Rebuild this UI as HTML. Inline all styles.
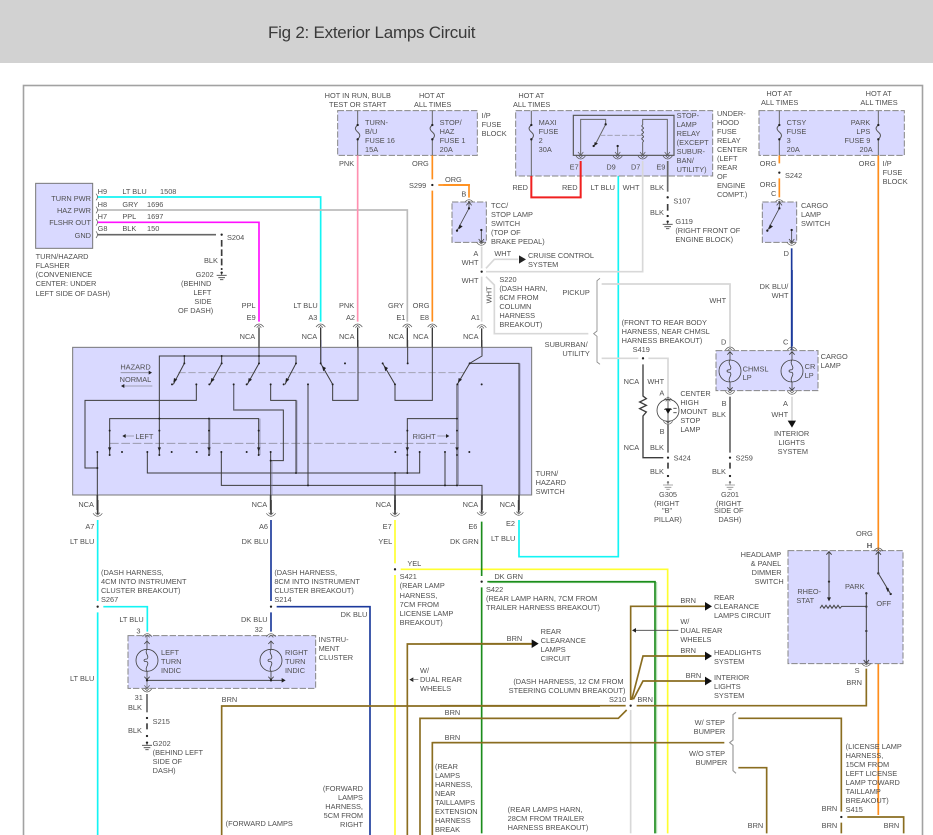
<!DOCTYPE html>
<html><head><meta charset="utf-8"><title>Fig 2: Exterior Lamps Circuit</title>
<style>
html,body{margin:0;padding:0;background:#fff;width:933px;height:835px;overflow:hidden}
#hd{position:absolute;left:0;top:0;width:933px;height:63px;background:#d2d2d2}
#hd span{position:absolute;left:268px;top:23px;font:17px/20px "Liberation Sans",sans-serif;letter-spacing:-.25px;color:#3a3a3a}
svg{position:absolute;left:0;top:0}
text{font-family:"Liberation Sans",sans-serif;font-size:22.2px;fill:#505050;stroke:none}
.w{fill:none;stroke-linejoin:miter}
.k{stroke:#3c3c3c}.g{stroke:#666}.c{stroke:#14f4f4}.m{stroke:#ff10ff}.y{stroke:#ffff30}.o{stroke:#ff8e1c}.r{stroke:#f02020}.p{stroke:#ff90b0}.b{stroke:#1c3a9c}.n{stroke:#8a6d20}.l{stroke:#d8d8d8}.a{stroke:#bcbcbc}.v{stroke:#1c8c1c}
.d{fill:none;stroke:#222;stroke-width:7;stroke-linecap:round}
.t{fill:none;stroke:#444;stroke-width:2.5}
.x{fill:#d9d9ff;stroke:#858585;stroke-width:3;stroke-dasharray:19 6}
.s{fill:#d9d9ff;stroke:#777;stroke-width:3}
.f{fill:#222;stroke:none}
.h{fill:#111;stroke:none}
.e{fill:none;stroke:#555;stroke-width:2}
</style></head><body>
<div id="hd"><span>Fig 2: Exterior Lamps Circuit</span></div>
<svg width="933" height="835" viewBox="0 0 933 835">
<defs>
<path id="ct" class="e" d="M-14 8Q0-10 14 8M-7 10L0 3L7 10"/>
<path id="cb" class="e" d="M-14-8Q0 10 14-8M-7-10L0-3L7-10"/>
<g id="fu"><path class="e" style="stroke-width:3" d="M0 0C-10 8-8 14 0 21C8 28 9 34 0 43"/><path class="d" d="M0 0h.01M0 43h.01"/></g>
<path id="ad" class="f" d="M-5-8H5L0 4Z"/>
<g id="gr"><path class="e" style="stroke:#444;stroke-width:2.5" d="M0 0V8M-15 8H15M-10 15H10M-5 21H5"/><path class="d" d="M0 0h.01"/></g>
<g id="lp"><circle r="33" fill="none" stroke="#444" stroke-width="2.5"/><path class="t" d="M0-33C-9-22 9-12 0-4C-12-4-12 4 0 4C9 12-9 22 0 33M0-58V-33M0 33V58M-8-49L0-58L8-49M-8 49L0 58L8 49"/></g>
<g id="sw"><rect class="x" x="907" y="366" width="103" height="121"/><path class="t" d="M958 366V385L922 452M995 450V487M987 477L995 487L1003 477M950 376L958 366L966 376"/><path class="d" d="M958 385h.01M922 452h.01M995 450h.01"/><path class="f" d="M929 434L939 439L927 448Z"/></g>
</defs>

<rect x="23.5" y="85.5" width="899" height="770" fill="none" stroke="#a2a2a2" stroke-width="1.6"/>

<!-- long wires real coords -->
<g class="w" stroke-width="1.7">
<path class="c" d="M519 520V556.7H618.3V161"/>
<path class="o" d="M878.3 155V815"/>
</g>

<!-- zoom1 -->
<g transform="translate(0,80) scale(.33333)" stroke-width="5">
<rect class="s" x="107" y="310" width="171" height="195"/>
<rect class="x" x="1013" y="92" width="419" height="134"/>
<path class="w g" style="stroke-width:3" d="M1073 92V135M1073 178V226M1297 92V135M1297 178V226"/>
<use href="#fu" x="1073" y="135"/><use href="#fu" x="1297" y="135"/>
<path class="w c" d="M293 351H962V725"/>
<path class="w a" d="M293 390H1222V725"/>
<path class="w m" d="M293 427H777V725"/>
<path class="w g" d="M293 464H648"/>
<path class="w k" style="stroke-dasharray:20 8" d="M665 480V570"/>
<path class="w p" d="M1073 226V725"/>
<path class="w o" d="M1297 226V298M1297 332V725M1315 315H1410"/>
<path class="d" d="M665 464h.01M1297 315h.01"/>
<use href="#gr" x="665" y="578"/>
<path class="w k" style="stroke-width:4" d="M777 742V810M962 742V810M1073 742V810M1222 742V810M1297 742V810"/>
<use href="#ct" x="777" y="733"/><use href="#ct" x="962" y="733"/><use href="#ct" x="1073" y="733"/><use href="#ct" x="1222" y="733"/><use href="#ct" x="1297" y="733"/>
<path class="e" d="M288 341Q297 351 288 361M288 380Q297 390 288 400M288 417Q297 427 288 437M288 454Q297 464 288 474"/>
<text x="974" y="54">HOT IN RUN, BULB</text><text x="987" y="81">TEST OR START</text>
<text x="1257" y="54">HOT AT</text><text x="1242" y="81">ALL TIMES</text>
<text x="1095" y="135">TURN-</text><text x="1095" y="162">B/U</text><text x="1095" y="189">FUSE 16</text><text x="1095" y="216">15A</text>
<text x="1319" y="135">STOP/</text><text x="1319" y="162">HAZ</text><text x="1319" y="189">FUSE 1</text><text x="1319" y="216">20A</text>
<text x="1017" y="258">PNK</text><text x="1236" y="258">ORG</text>
<text x="1227" y="324">S299</text><text x="1335" y="306">ORG</text>
<text x="293" y="342">H9</text><text x="367" y="342">LT BLU</text><text x="480" y="342">1508</text>
<text x="293" y="381">H8</text><text x="367" y="381">GRY</text><text x="441" y="381">1696</text>
<text x="293" y="417">H7</text><text x="367" y="417">PPL</text><text x="441" y="417">1697</text>
<text x="293" y="453">G8</text><text x="367" y="453">BLK</text><text x="441" y="453">150</text>
<g text-anchor="end"><text x="273" y="363">TURN PWR</text><text x="273" y="399">HAZ PWR</text><text x="273" y="435">FLSHR OUT</text><text x="273" y="474">GND</text></g>
<text x="681" y="480">S204</text><text x="612" y="549">BLK</text><text x="587" y="591">G202</text>
<text x="543" y="618">(BEHIND</text><text x="580" y="645">LEFT</text><text x="583" y="672">SIDE</text><text x="534" y="699">OF DASH)</text>
<text x="107" y="537">TURN/HAZARD</text><text x="107" y="564">FLASHER</text><text x="107" y="591">(CONVENIENCE</text><text x="107" y="618">CENTER: UNDER</text><text x="107" y="648">LEFT SIDE OF DASH)</text>
<text x="725" y="684">PPL</text><text x="740" y="720">E9</text><text x="719" y="777">NCA</text>
<text x="880" y="684">LT BLU</text><text x="925" y="720">A3</text><text x="905" y="777">NCA</text>
<text x="1017" y="684">PNK</text><text x="1038" y="720">A2</text><text x="1017" y="777">NCA</text>
<text x="1164" y="684">GRY</text><text x="1189" y="720">E1</text><text x="1165" y="777">NCA</text>
<text x="1238" y="684">ORG</text><text x="1260" y="720">E8</text><text x="1239" y="777">NCA</text>
</g>

<!-- zoom2 -->
<g transform="translate(460,80) scale(.33333)" stroke-width="5">
<rect class="x" x="167" y="92" width="591" height="196"/>
<rect class="x" x="897" y="92" width="436" height="134"/>
<rect x="340" y="106" width="302" height="120" fill="none" stroke="#555" stroke-width="3.5"/>
<path class="w g" style="stroke-width:3" d="M214 92V135M214 178V288M958 92V135M958 178V226M1255 92V135M1255 178V226"/>
<use href="#fu" x="214" y="135"/><use href="#fu" x="958" y="135"/><use href="#fu" x="1255" y="135"/>
<path class="w g" style="stroke-width:3" d="M362 226V118H437V133L405 195M548 226V186M548 135V118H622V226M473 198V226"/>
<path class="e" style="stroke-width:3" d="M548 135c-9 5 9 8 0 12c-9 5 9 8 0 13c-9 5 9 8 0 13c-9 5 9 8 0 13"/>
<path class="w a" style="stroke-width:2.5;stroke-dasharray:16 6;stroke:#9a9aa8" d="M420 166H548"/>
<path class="d" d="M437 133h.01M401 198h.01M473 198h.01"/>
<path class="f" d="M404 186L414 191L402 198Z"/>
<path class="e" d="M354 216L362 226L370 216M465 216L473 226L481 216M540 216L548 226L556 216M614 216L622 226L630 216"/>
<use href="#cb" x="362" y="236"/><use href="#cb" x="473" y="236"/><use href="#cb" x="548" y="236"/><use href="#cb" x="623" y="236"/>
<path class="w r" style="stroke-width:6" d="M214 288V352H362V243"/>
<path class="w l" d="M548 243V575H78M65 500V565M65 590V725M78 565L103 538H175M78 590L103 615V761H385M425 612H810V800"/>
<path class="w g" d="M623 243V335"/>
<path class="w k" style="stroke-dasharray:20 7" d="M623 372V395"/>
<path class="d" d="M623 352h.01M623 408h.01M65 575h.01M958 278h.01"/>
<use href="#gr" x="623" y="425"/>
<path class="f" d="M177 526V551L198 538Z"/>
<path class="w o" d="M-50 315H27V353M958 226V250M958 295V352"/>
<use href="#ct" x="27" y="360"/><use href="#ct" x="958" y="360"/>
<use href="#sw" x="-931"/><use href="#sw"/>
<use href="#cb" x="64" y="495"/><use href="#cb" x="995" y="495"/>
<path class="w b" d="M995 505V810"/>
<use href="#ct" x="65" y="735"/>
<path class="w k" style="stroke-width:4" d="M65 745V810"/>
<text x="175" y="54">HOT AT</text><text x="159" y="81">ALL TIMES</text>
<text x="65" y="114">I/P</text><text x="65" y="141">FUSE</text><text x="65" y="168">BLOCK</text>
<text x="236" y="135">MAXI</text><text x="236" y="162">FUSE</text><text x="236" y="189">2</text><text x="236" y="216">30A</text>
<text x="650" y="114">STOP-</text><text x="650" y="141">LAMP</text><text x="650" y="168">RELAY</text><text x="650" y="195">(EXCEPT</text><text x="650" y="222">SUBUR-</text><text x="650" y="249">BAN/</text><text x="650" y="276">UTILITY)</text>
<text x="771" y="108">UNDER-</text><text x="771" y="135">HOOD</text><text x="771" y="162">FUSE</text><text x="771" y="189">RELAY</text><text x="771" y="216">CENTER</text><text x="771" y="243">(LEFT</text><text x="771" y="270">REAR</text><text x="771" y="297">OF</text><text x="771" y="324">ENGINE</text><text x="771" y="351">COMPT.)</text>
<text x="329" y="268">E7</text><text x="439" y="268">D9</text><text x="513" y="268">D7</text><text x="589" y="268">E9</text>
<text x="157" y="330">RED</text><text x="306" y="330">RED</text><text x="392" y="330">LT BLU</text><text x="488" y="330">WHT</text><text x="570" y="330">BLK</text>
<text x="640" y="370">S107</text><text x="570" y="405">BLK</text><text x="646" y="432">G119</text><text x="646" y="459">(RIGHT FRONT OF</text><text x="646" y="486">ENGINE BLOCK)</text>
<text x="93" y="384">TCC/</text><text x="93" y="411">STOP LAMP</text><text x="93" y="438">SWITCH</text><text x="93" y="465">(TOP OF</text><text x="93" y="492">BRAKE PEDAL)</text>
<text x="4" y="349">B</text><text x="40" y="528">A</text><text x="5" y="555">WHT</text><text x="5" y="609">WHT</text>
<text transform="translate(94,670) rotate(-90)" x="0" y="0">WHT</text>
<text x="103" y="528">WHT</text><text x="204" y="534">CRUISE CONTROL</text><text x="204" y="561">SYSTEM</text>
<text x="118" y="606">S220</text><text x="118" y="633">(DASH HARN,</text><text x="118" y="660">6CM FROM</text><text x="118" y="687">COLUMN</text><text x="118" y="714">HARNESS</text><text x="118" y="741">BREAKOUT)</text>
<text x="33" y="720">A1</text><text x="9" y="777">NCA</text>
<text x="919" y="48">HOT AT</text><text x="903" y="75">ALL TIMES</text><text x="1217" y="48">HOT AT</text><text x="1201" y="75">ALL TIMES</text>
<text x="980" y="135">CTSY</text><text x="980" y="162">FUSE</text><text x="980" y="189">3</text><text x="980" y="216">20A</text>
<g text-anchor="end"><text x="1231" y="135">PARK</text><text x="1231" y="162">LPS</text><text x="1231" y="189">FUSE 9</text><text x="1238" y="216">20A</text></g>
<text x="899" y="258">ORG</text><text x="975" y="294">S242</text><text x="899" y="321">ORG</text><text x="933" y="348">C</text>
<text x="1023" y="384">CARGO</text><text x="1023" y="411">LAMP</text><text x="1023" y="438">SWITCH</text><text x="971" y="528">D</text>
<text x="1196" y="258">ORG</text><text x="1268" y="258">I/P</text><text x="1268" y="285">FUSE</text><text x="1268" y="312">BLOCK</text>
</g>

<!-- zoom3: hazard switch -->
<g transform="translate(60,340) scale(.33333)" stroke-width="3">
<rect class="s" x="38" y="22" width="1377" height="443"/>
<path class="w a" style="stroke-dasharray:22 8;stroke-width:3;stroke:#a4a4b4" d="M355 98H1215"/>
<path class="w a" style="stroke-dasharray:26 8;stroke-width:2.5;stroke:#8f8fa0" d="M150 310H1185"/>
<path class="w k" style="stroke-width:3" d="M298 345V48H708V70L675 133M373 48V70L340 133M485 48V70L450 133M597 0V70L562 133M782 0V70L818 133V181H894V0M968 70L1005 133V181H1117V0M1043 0V70M1266 0V48L1229 70L1192 133M1229 70H1377V510M409 133V181H75V384H112M112 336V510M521 133V210H670V362H632M632 336V510M632 133V181H708V399M744 133V436M149 345V236H596V345M447 236V345M262 336V399H1079V336M484 336V436H1266V510M1005 399V510M1042 399V236H1191M1191 133V436M1155 336V436"/>
<path class="w k" style="stroke-width:5" d="M632 465V510M1005 465V510M1266 465V510M1377 465V510M112 465V510"/>
<path class="w a" style="stroke:#8080a0;stroke-width:2" d="M784 0V70M1195 133V436M711 181V399M600 236V345M450 236V345M522 133V210M636 362V465M1380 70V465"/>
<path class="d" style="stroke-width:6" d="M373 48h.01M485 48h.01M597 48h.01M373 70h.01M485 70h.01M597 70h.01M708 70h.01M336 133h.01M409 133h.01M448 133h.01M521 133h.01M560 133h.01M632 133h.01M671 133h.01M744 133h.01M782 70h.01M855 70h.01M818 133h.01M968 70h.01M1043 70h.01M1005 133h.01M1229 70h.01M1192 133h.01M1265 133h.01M298 236h.01M447 236h.01M1191 236h.01M149 272h.01M298 272h.01M447 272h.01M596 272h.01M1042 272h.01M1191 272h.01M149 345h.01M298 345h.01M447 345h.01M596 345h.01M1042 345h.01M1191 345h.01M112 336h.01M186 336h.01M262 336h.01M335 336h.01M410 336h.01M484 336h.01M560 336h.01M632 336h.01M1006 336h.01M1079 336h.01M1155 336h.01M1228 336h.01M112 384h.01M632 362h.01M708 399h.01M1005 399h.01M1042 399h.01M744 436h.01M1155 436h.01M1191 436h.01"/>
<path class="f" d="M342 114L352 119L340 128ZM454 114L464 119L452 128ZM566 114L576 119L564 128ZM678 114L688 119L676 128ZM786 78L798 84L790 94ZM972 78L984 84L976 94ZM1196 114L1206 119L1194 128Z"/>
<use href="#ad" x="149" y="330"/><use href="#ad" x="298" y="330"/><use href="#ad" x="447" y="330"/><use href="#ad" x="596" y="330"/><use href="#ad" x="1042" y="330"/><use href="#ad" x="1191" y="330"/>
<path class="w a" style="stroke:#8a8a9a;stroke-width:2.5" d="M182 98H270M277 138H190M222 288H195M1132 288H1160"/>
<path class="f" d="M266 92V104L276 98ZM193 132V144L183 138ZM197 282V294L187 288ZM1158 282V294L1168 288Z"/>
<text x="181" y="88">HAZARD</text><text x="179" y="126">NORMAL</text><text x="226" y="297">LEFT</text><text x="1058" y="297">RIGHT</text>
<text x="55" y="501">NCA</text><text x="575" y="501">NCA</text><text x="947" y="501">NCA</text><text x="1208" y="501">NCA</text><text x="1319" y="501">NCA</text>
<text x="1427" y="408">TURN/</text><text x="1427" y="435">HAZARD</text><text x="1427" y="462">SWITCH</text>
</g>

<!-- zoom4 -->
<g transform="translate(530,270) scale(.33333)" stroke-width="5">
<rect class="x" x="558" y="242" width="306" height="120"/>
<path class="w l" d="M215 265H325M355 265H414V380M600 42V228M786 380V452"/>
<path class="e" style="stroke:#888;stroke-width:2.5" d="M210 25L201 32V183L191 191L201 199V276L210 283"/>
<path class="w k" style="stroke-width:4" d="M339 283V378L349 386L329 396L349 406L329 416L349 426L339 438V563H400"/>
<path class="w g" d="M414 465V548M600 380V548"/>
<path class="w k" style="stroke-dasharray:18 7" d="M414 578V603M600 578V603"/>
<path class="d" d="M339 265h.01M414 563h.01M600 563h.01M414 618h.01M600 618h.01"/>
<g style="opacity:.6"><use href="#gr" x="414" y="637"/><use href="#gr" x="600" y="637"/></g>
<path class="w b" d="M786 0V228"/>
<use href="#ct" x="414" y="384"/><use href="#cb" x="414" y="462"/>
<circle cx="414" cy="421" r="33" fill="none" stroke="#444" stroke-width="2.5"/>
<path class="t" d="M414 380V465M402 418H426M430 415H440M430 428H440"/>
<path class="h" d="M405 415H424L414 432Z"/>
<use href="#ct" x="600" y="232"/><use href="#ct" x="786" y="232"/>
<use href="#lp" x="600" y="303"/><use href="#lp" x="786" y="303"/>
<use href="#cb" x="600" y="372"/><use href="#cb" x="786" y="372"/>
<path class="h" d="M773 452H798L786 473Z"/>
<text x="97" y="75">PICKUP</text><text x="538" y="99">WHT</text>
<text x="44" y="231">SUBURBAN/</text><text x="97" y="258">UTILITY</text><text x="308" y="246">S419</text>
<text x="275" y="165">(FRONT TO REAR BODY</text><text x="275" y="192">HARNESS, NEAR CHMSL</text><text x="275" y="219">HARNESS BREAKOUT)</text>
<text x="281" y="342">NCA</text><text x="352" y="342">WHT</text><text x="388" y="376">A</text>
<text x="451" y="378">CENTER</text><text x="451" y="405">HIGH</text><text x="451" y="432">MOUNT</text><text x="451" y="459">STOP</text><text x="451" y="486">LAMP</text>
<text x="389" y="492">B</text><text x="281" y="540">NCA</text><text x="360" y="540">BLK</text><text x="431" y="571">S424</text><text x="360" y="612">BLK</text>
<text x="387" y="681">G305</text><text x="372" y="708">(RIGHT</text><text x="396" y="729">"B"</text><text x="372" y="756">PILLAR)</text>
<text x="638" y="304">CHMSL</text><text x="638" y="330">LP</text><text x="824" y="297">CR</text><text x="824" y="324">LP</text>
<text x="573" y="223">D</text><text x="759" y="223">C</text><text x="872" y="267">CARGO</text><text x="872" y="294">LAMP</text>
<text x="575" y="408">B</text><text x="546" y="441">BLK</text><text x="617" y="571">S259</text><text x="546" y="612">BLK</text>
<text x="573" y="681">G201</text><text x="558" y="708">(RIGHT</text><text x="552" y="729">SIDE OF</text><text x="565" y="756">DASH)</text>
<text x="759" y="408">A</text><text x="724" y="441">WHT</text><text x="732" y="498">INTERIOR</text><text x="745" y="525">LIGHTS</text><text x="743" y="552">SYSTEM</text>
<text x="689" y="57">DK BLU/</text><text x="725" y="84">WHT</text>
<text x="978" y="798">ORG</text><text x="1010" y="834">H</text>
</g>

<!-- zoom5 -->
<g transform="translate(0,500) scale(.33333)" stroke-width="5">
<path class="w k" style="stroke-width:5" d="M293 0V42M813 0V42M1185 0V42"/>
<use href="#cb" x="293" y="48"/><use href="#cb" x="813" y="48"/><use href="#cb" x="1185" y="48"/>
<path class="w c" d="M293 60V303M293 337V1010M310 320H442V395"/>
<path class="w b" d="M813 60V303M813 337V395M830 320H1110V1010"/>
<rect class="x" x="384" y="407" width="563" height="158"/>
<use href="#ct" x="442" y="402"/><use href="#ct" x="813" y="402"/>
<use href="#lp" x="441" y="481"/><use href="#lp" x="813" y="481"/>
<path class="t" style="stroke-width:3" d="M441 541H850"/>
<path class="f" d="M845 534V548L857 541Z"/>
<path class="e" d="M441 540V566M433 556L441 566L449 556M441 407V425"/>
<path class="d" d="M293 320h.01M813 320h.01M441 541h.01M813 541h.01M441 654h.01M441 708h.01M1185 208h.01"/>
<use href="#cb" x="441" y="575"/>
<path class="w g" d="M441 582V637"/>
<path class="w k" style="stroke-dasharray:18 7" d="M441 670V695"/>
<use href="#gr" x="441" y="728"/>
<path class="w y" d="M1185 60V190M1185 225V1010"/>
<path class="w n" d="M665 1010V618H1800M1222 1010V432H1600M1260 1010V655H1800M1297 1010V728H1800"/>
<path class="f" d="M1240 532V546L1228 539Z"/>
<path class="e" style="stroke:#666" d="M1255 539H1235"/>
<text x="256" y="87">A7</text><text x="777" y="87">A6</text><text x="1148" y="87">E7</text>
<text x="210" y="132">LT BLU</text><text x="725" y="132">DK BLU</text><text x="1135" y="132">YEL</text>
<text x="303" y="225">(DASH HARNESS,</text><text x="303" y="252">4CM INTO INSTRUMENT</text><text x="303" y="279">CLUSTER BREAKOUT)</text><text x="303" y="306">S267</text>
<text x="823" y="225">(DASH HARNESS,</text><text x="823" y="252">8CM INTO INSTRUMENT</text><text x="823" y="279">CLUSTER BREAKOUT)</text><text x="823" y="306">S214</text>
<text x="358" y="366">LT BLU</text><text x="409" y="400">3</text><text x="723" y="366">DK BLU</text><text x="1022" y="351">DK BLU</text><text x="764" y="396">32</text>
<text x="483" y="465">LEFT</text><text x="483" y="492">TURN</text><text x="483" y="519">INDIC</text>
<text x="855" y="465">RIGHT</text><text x="855" y="492">TURN</text><text x="855" y="519">INDIC</text>
<text x="956" y="426">INSTRU-</text><text x="956" y="453">MENT</text><text x="956" y="480">CLUSTER</text>
<text x="210" y="543">LT BLU</text><text x="404" y="600">31</text><text x="384" y="630">BLK</text><text x="458" y="672">S215</text><text x="384" y="699">BLK</text>
<text x="458" y="738">G202</text><text x="458" y="765">(BEHIND LEFT</text><text x="458" y="792">SIDE OF</text><text x="458" y="819">DASH)</text>
<text x="1222" y="198">YEL</text><text x="1199" y="237">S421</text><text x="1199" y="264">(REAR LAMP</text><text x="1199" y="294">HARNESS,</text><text x="1199" y="321">7CM FROM</text><text x="1199" y="348">LICENSE LAMP</text><text x="1199" y="375">BREAKOUT)</text>
<text x="1260" y="519">W/</text><text x="1260" y="546">DUAL REAR</text><text x="1260" y="573">WHEELS</text>
<text x="665" y="606">BRN</text><text x="1334" y="645">BRN</text><text x="1334" y="720">BRN</text>
<text x="1305" y="807">(REAR</text><text x="1305" y="834">LAMPS</text><text x="1305" y="861">HARNESS,</text><text x="1305" y="888">NEAR</text><text x="1305" y="915">TAILLAMPS</text><text x="1305" y="942">EXTENSION</text><text x="1305" y="969">HARNESS</text><text x="1305" y="996">BREAK</text>
<g text-anchor="end"><text x="1089" y="873">(FORWARD</text><text x="1089" y="900">LAMPS</text><text x="1089" y="927">HARNESS,</text><text x="1089" y="954">5CM FROM</text><text x="1089" y="981">RIGHT</text></g>
<text x="677" y="978">(FORWARD LAMPS</text>
<text x="1350" y="132">DK GRN</text><text x="1405" y="87">E6</text>
</g>

<!-- zoom6 -->
<g transform="translate(460,540) scale(.33333)" stroke-width="5">
<rect class="x" x="984" y="32" width="345" height="339"/>
<use href="#ct" x="1255" y="25"/>
<path class="w l" d="M512 510V880"/>
<path class="w y" d="M-178 88H623V880"/>
<path class="w" style="stroke:#a5dba5;stroke-width:3" d="M88 128H590V880"/>
<path class="w v" d="M65 -55V108M65 142V880M82 125H585V880"/>
<path class="w n" d="M-60 311H215M-60 497H497M530 497H1219V386M-120 535H475L500 510M-83 608H793M512 480V199H735M515 480L549 348H735M520 478L549 423H735M835 535H1144V815M835 683H920V880M1162 831H1331V880M1144 848V880"/>
<path class="e" style="stroke:#999;stroke-width:3.5" d="M828 517L819 524V600L809 608L819 616V692L828 700"/>
<path class="d" d="M65 125h.01M512 497h.01M1144 831h.01M1107 125h.01M1219 160h.01M1219 200h.01M1219 273h.01M1255 100h.01M1292 162h.01"/>
<path class="h" d="M215 298V324L236 311ZM735 186V212L756 199ZM735 335V361L756 348ZM735 410V436L756 423Z"/>
<path class="t" d="M655 271H525"/><path class="f" d="M528 264V278L516 271Z"/>
<path class="t" style="stroke-width:3" d="M1107 35V178M1099 44L1107 35L1115 44M1080 205L1086 196L1092 205L1098 196L1104 205L1110 196L1116 205L1122 196L1128 205L1134 196L1140 205L1145 199H1219M1219 160V370M1211 360L1219 370L1227 360M1255 35V100L1292 162M1247 44L1255 35L1263 44"/>
<path class="f" d="M1101 172H1113L1107 184ZM1277 142L1287 146L1284 157Z"/>
<use href="#cb" x="1219" y="378"/>
<text x="1221" y="24">H</text>
<text x="842" y="51">HEADLAMP</text><text x="872" y="78">&amp; PANEL</text><text x="875" y="105">DIMMER</text><text x="884" y="132">SWITCH</text>
<text x="1012" y="162">RHEO-</text><text x="1009" y="189">STAT</text><text x="1155" y="147">PARK</text><text x="1249" y="198">OFF</text>
<text x="1184" y="399">S</text><text x="1159" y="435">BRN</text>
<text x="103" y="117">DK GRN</text><text x="78" y="156">S422</text><text x="78" y="183">(REAR LAMP HARN, 7CM FROM</text><text x="78" y="210">TRAILER HARNESS BREAKOUT)</text>
<text x="762" y="180">REAR</text><text x="762" y="207">CLEARANCE</text><text x="762" y="234">LAMPS CIRCUIT</text><text x="661" y="189">BRN</text>
<text x="661" y="252">W/</text><text x="661" y="279">DUAL REAR</text><text x="661" y="306">WHEELS</text>
<text x="661" y="339">BRN</text><text x="762" y="345">HEADLIGHTS</text><text x="762" y="372">SYSTEM</text>
<text x="677" y="414">BRN</text><text x="762" y="420">INTERIOR</text><text x="762" y="447">LIGHTS</text><text x="762" y="474">SYSTEM</text>
<text x="160" y="432">(DASH HARNESS, 12 CM FROM</text><text x="146" y="459">STEERING COLUMN BREAKOUT)</text><text x="447" y="486">S210</text><text x="532" y="486">BRN</text>
<text x="242" y="282">REAR</text><text x="242" y="309">CLEARANCE</text><text x="242" y="336">LAMPS</text><text x="242" y="363">CIRCUIT</text><text x="140" y="303">BRN</text>
<text x="704" y="555">W/ STEP</text><text x="701" y="582">BUMPER</text><text x="687" y="648">W/O STEP</text><text x="707" y="675">BUMPER</text>
<text x="1157" y="627">(LICENSE LAMP</text><text x="1157" y="654">HARNESS,</text><text x="1157" y="681">15CM FROM</text><text x="1157" y="708">LEFT LICENSE</text><text x="1157" y="735">LAMP TOWARD</text><text x="1157" y="762">TAILLAMP</text><text x="1157" y="789">BREAKOUT)</text><text x="1157" y="816">S415</text>
<text x="1085" y="813">BRN</text><text x="1085" y="864">BRN</text><text x="1271" y="864">BRN</text><text x="863" y="864">BRN</text>
<text x="143" y="816">(REAR LAMPS HARN,</text><text x="143" y="843">28CM FROM TRAILER</text><text x="143" y="870">HARNESS BREAKOUT)</text>
<text x="138" y="-42">E2</text><text x="93" y="3">LT BLU</text>
<path class="w k" style="stroke-width:5" d="M65 -120V-82M176 -120V-82"/>
<use href="#cb" x="65" y="-75"/><use href="#cb" x="176" y="-75"/>
</g>
</svg>
</body></html>
